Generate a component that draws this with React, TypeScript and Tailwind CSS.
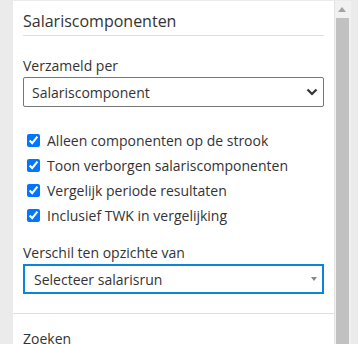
import React from "react";

const options = [
  "Alleen componenten op de strook",
  "Toon verborgen salariscomponenten",
  "Vergelijk periode resultaten",
  "Inclusief TWK in vergelijking",
];

export default function App() {
  return (
    <div className="flex h-[344px] w-[358px] overflow-hidden bg-[#ebebeb] pt-px font-['Open_Sans',sans-serif] text-[#333]">
      <div className="w-[13px] shrink-0" />

      {/* filter panel */}
      <div className="w-[321px] shrink-0 overflow-hidden bg-white">
        <div className="px-[10px] pb-[19px] pt-[9px]">
          <h2 className="border-b border-[#dedede] pb-[3px] text-[16px] leading-[22px] font-normal">
            Salariscomponenten
          </h2>

          <div className="mt-[20px] text-[14px] leading-[20px]">Verzameld per</div>
          <div className="mt-px flex h-[30px] items-center justify-between rounded-[2px] border border-[#767676] pl-[8px] pr-[4px] text-[14px]">
            <span>Salariscomponent</span>
            <svg width="12" height="8" viewBox="0 0 12 8" className="mr-px">
              <path d="M1.5 1.5 L6 6 L10.5 1.5" fill="none" stroke="#333" strokeWidth="2.2" />
            </svg>
          </div>

          <div className="mt-[21px] flex flex-col">
            {options.map((label) => (
              <label key={label} className="flex h-[25px] items-center text-[14px] leading-[25px]">
                <input type="checkbox" defaultChecked className="ml-[4px] h-[13px] w-[13px] accent-[#0075ff]" />
                <span className="ml-[7px]">{label}</span>
              </label>
            ))}
          </div>

          <div className="mt-[15px] text-[14px] leading-[20px]">Verschil ten opzichte van</div>
          <div className="mt-px flex h-[30px] items-center justify-between border-2 border-[#0b85d8] pl-[9px] pr-[5px] text-[14px]">
            <span>Selecteer salarisrun</span>
            <svg width="6" height="5" viewBox="0 0 6 5">
              <path d="M0 0 H6 L3 4 Z" fill="#888" />
            </svg>
          </div>
        </div>

        <div className="border-t border-[#dedede] px-[10px] pt-[15px]">
          <div className="text-[14px] leading-[20px]">Zoeken</div>
        </div>
      </div>

      {/* scrollbar */}
      <div className="flex w-[17px] shrink-0 flex-col border-l border-[#e3e3e3] bg-[#f1f1f1]">
        <div className="flex h-[17px] items-center justify-center pr-[2px]">
          <svg width="8" height="5" viewBox="0 0 8 5">
            <path d="M0 5 L4 0 L8 5 Z" fill="#a3a3a3" />
          </svg>
        </div>
        <div className="ml-px w-[13px] flex-1 bg-[#c1c1c1]" />
      </div>
    </div>
  );
}
